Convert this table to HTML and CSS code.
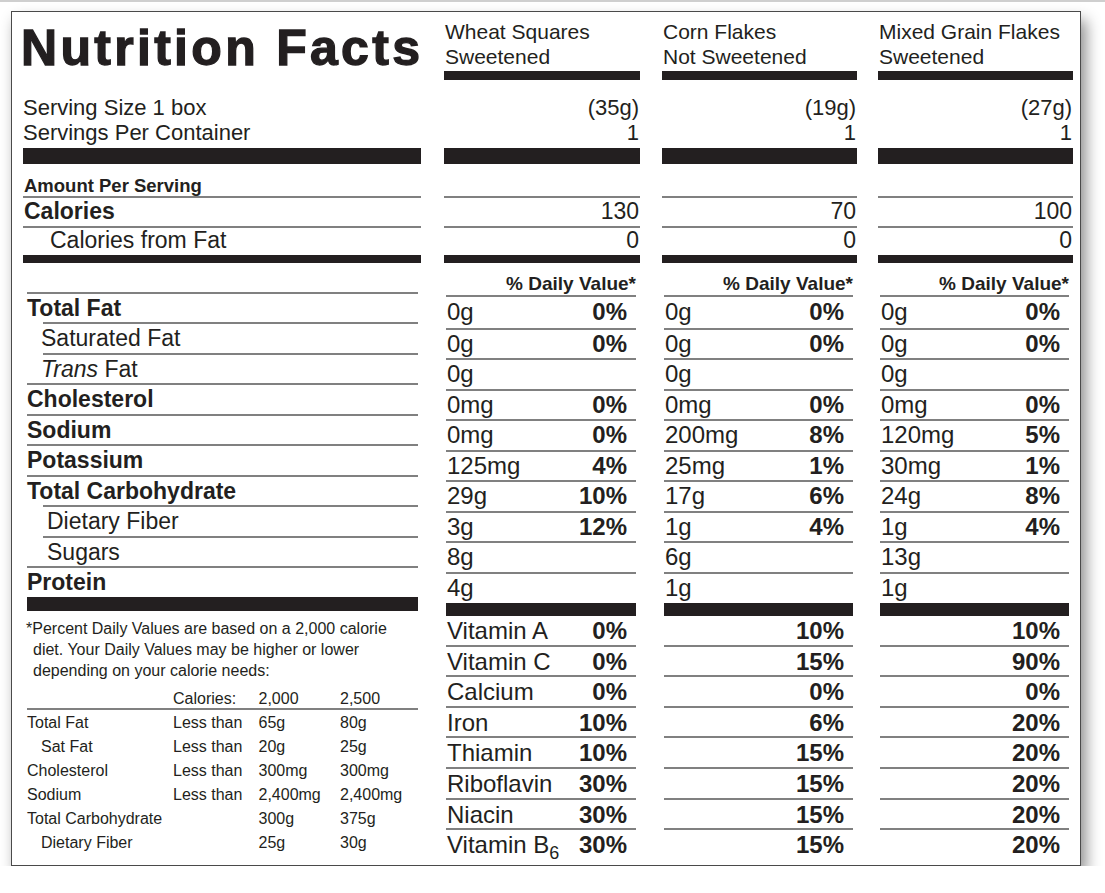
FILE: index.html
```html
<!DOCTYPE html>
<html lang="en">
<head>
<meta charset="utf-8">
<title>Nutrition Facts</title>
<link rel="stylesheet" href="styles.css">
</head>
<body>
<div class="label">
  <div class="col col-main">
    <div class="title">Nutrition Facts</div>
    <div class="serving">
      <div>Serving Size 1 box</div>
      <div>Servings Per Container</div>
    </div>
    <div class="bar bar-thick"></div>
    <div class="amount">Amount Per Serving</div>
    <div class="cal">Calories</div>
    <div class="calfat">Calories from Fat</div>
    <div class="bar bar-mid"></div>
    <div class="gap-l"></div>
    <div class="nutrients">
      <div class="n-row major">Total Fat</div>
      <div class="n-row sub">Saturated Fat</div>
      <div class="n-row sub"><i>Trans</i> Fat</div>
      <div class="n-row major">Cholesterol</div>
      <div class="n-row major">Sodium</div>
      <div class="n-row major">Potassium</div>
      <div class="n-row major">Total Carbohydrate</div>
      <div class="n-row sub sub2">Dietary Fiber</div>
      <div class="n-row sub sub2">Sugars</div>
      <div class="n-row major">Protein</div>
    </div>
    <div class="bar bar-foot"></div>
    <div class="footnote">
      <p class="fn-text">*Percent Daily Values are based on a 2,000 calorie<br>diet. Your Daily Values may be higher or lower<br>depending on your calorie needs:</p>
      <div class="dv-table">
        <div class="dv-line dv-head"><span></span><span>Calories:</span><span>2,000</span><span>2,500</span></div>
        <div class="dv-body">
          <div class="dv-line"><span>Total Fat</span><span>Less than</span><span>65g</span><span>80g</span></div>
          <div class="dv-line"><span class="ind">Sat Fat</span><span>Less than</span><span>20g</span><span>25g</span></div>
          <div class="dv-line"><span>Cholesterol</span><span>Less than</span><span>300mg</span><span>300mg</span></div>
          <div class="dv-line"><span>Sodium</span><span>Less than</span><span>2,400mg</span><span>2,400mg</span></div>
          <div class="dv-line"><span>Total Carbohydrate</span><span></span><span>300g</span><span>375g</span></div>
          <div class="dv-line"><span class="ind">Dietary Fiber</span><span></span><span>25g</span><span>30g</span></div>
        </div>
      </div>
    </div>
  </div>

  <div class="col col-prod p1">
    <div class="prod-name">Wheat Squares<br>Sweetened</div>
    <div class="bar bar-head"></div>
    <div class="serving right">
      <div>(35g)</div>
      <div>1</div>
    </div>
    <div class="bar bar-thick"></div>
    <div class="blank-line"></div>
    <div class="cal-val">130</div>
    <div class="calfat-val">0</div>
    <div class="bar bar-mid"></div>
    <div class="dv-title">% Daily Value*</div>
    <div class="d-rows">
      <div class="d-row"><span>0g</span><b>0%</b></div>
      <div class="d-row"><span>0g</span><b>0%</b></div>
      <div class="d-row"><span>0g</span></div>
      <div class="d-row"><span>0mg</span><b>0%</b></div>
      <div class="d-row"><span>0mg</span><b>0%</b></div>
      <div class="d-row"><span>125mg</span><b>4%</b></div>
      <div class="d-row"><span>29g</span><b>10%</b></div>
      <div class="d-row"><span>3g</span><b>12%</b></div>
      <div class="d-row"><span>8g</span></div>
      <div class="d-row"><span>4g</span></div>
    </div>
    <div class="bar bar-vit"></div>
    <div class="v-rows">
      <div class="v-row"><span>Vitamin A</span><b>0%</b></div>
      <div class="v-row"><span>Vitamin C</span><b>0%</b></div>
      <div class="v-row"><span>Calcium</span><b>0%</b></div>
      <div class="v-row"><span>Iron</span><b>10%</b></div>
      <div class="v-row"><span>Thiamin</span><b>10%</b></div>
      <div class="v-row"><span>Riboflavin</span><b>30%</b></div>
      <div class="v-row"><span>Niacin</span><b>30%</b></div>
      <div class="v-row"><span>Vitamin B<sub>6</sub></span><b>30%</b></div>
    </div>
  </div>

  <div class="col col-prod p2">
    <div class="prod-name">Corn Flakes<br>Not Sweetened</div>
    <div class="bar bar-head"></div>
    <div class="serving right">
      <div>(19g)</div>
      <div>1</div>
    </div>
    <div class="bar bar-thick"></div>
    <div class="blank-line"></div>
    <div class="cal-val">70</div>
    <div class="calfat-val">0</div>
    <div class="bar bar-mid"></div>
    <div class="dv-title">% Daily Value*</div>
    <div class="d-rows">
      <div class="d-row"><span>0g</span><b>0%</b></div>
      <div class="d-row"><span>0g</span><b>0%</b></div>
      <div class="d-row"><span>0g</span></div>
      <div class="d-row"><span>0mg</span><b>0%</b></div>
      <div class="d-row"><span>200mg</span><b>8%</b></div>
      <div class="d-row"><span>25mg</span><b>1%</b></div>
      <div class="d-row"><span>17g</span><b>6%</b></div>
      <div class="d-row"><span>1g</span><b>4%</b></div>
      <div class="d-row"><span>6g</span></div>
      <div class="d-row"><span>1g</span></div>
    </div>
    <div class="bar bar-vit"></div>
    <div class="v-rows">
      <div class="v-row"><span></span><b>10%</b></div>
      <div class="v-row"><span></span><b>15%</b></div>
      <div class="v-row"><span></span><b>0%</b></div>
      <div class="v-row"><span></span><b>6%</b></div>
      <div class="v-row"><span></span><b>15%</b></div>
      <div class="v-row"><span></span><b>15%</b></div>
      <div class="v-row"><span></span><b>15%</b></div>
      <div class="v-row"><span></span><b>15%</b></div>
    </div>
  </div>

  <div class="col col-prod p3">
    <div class="prod-name">Mixed Grain Flakes<br>Sweetened</div>
    <div class="bar bar-head"></div>
    <div class="serving right">
      <div>(27g)</div>
      <div>1</div>
    </div>
    <div class="bar bar-thick"></div>
    <div class="blank-line"></div>
    <div class="cal-val">100</div>
    <div class="calfat-val">0</div>
    <div class="bar bar-mid"></div>
    <div class="dv-title">% Daily Value*</div>
    <div class="d-rows">
      <div class="d-row"><span>0g</span><b>0%</b></div>
      <div class="d-row"><span>0g</span><b>0%</b></div>
      <div class="d-row"><span>0g</span></div>
      <div class="d-row"><span>0mg</span><b>0%</b></div>
      <div class="d-row"><span>120mg</span><b>5%</b></div>
      <div class="d-row"><span>30mg</span><b>1%</b></div>
      <div class="d-row"><span>24g</span><b>8%</b></div>
      <div class="d-row"><span>1g</span><b>4%</b></div>
      <div class="d-row"><span>13g</span></div>
      <div class="d-row"><span>1g</span></div>
    </div>
    <div class="bar bar-vit"></div>
    <div class="v-rows">
      <div class="v-row"><span></span><b>10%</b></div>
      <div class="v-row"><span></span><b>90%</b></div>
      <div class="v-row"><span></span><b>0%</b></div>
      <div class="v-row"><span></span><b>20%</b></div>
      <div class="v-row"><span></span><b>20%</b></div>
      <div class="v-row"><span></span><b>20%</b></div>
      <div class="v-row"><span></span><b>20%</b></div>
      <div class="v-row"><span></span><b>20%</b></div>
    </div>
  </div>
</div>
</body>
</html>
```

FILE: styles.css
```css
html, body {
  background: #ffffff;
}

body {
  margin: 0;
  border-top: 2px solid #cfcfcf;
  padding: 9px 0 0 11px;
  font-family: "Liberation Sans", Arial, Helvetica, sans-serif;
  color: #231f20;
}

.label {
  width: 1070px;
  height: 855px;
  box-sizing: border-box;
  border: 1px solid #4a4a4a;
  box-shadow: 5px 9px 14px rgba(0, 0, 0, 0.45);
  background: #ffffff;
  display: flex;
  padding-left: 11px;
}

.col {
  display: flex;
  flex-direction: column;
  flex: none;
}

.col-main {
  width: 398px;
}

.p1 {
  width: 196px;
  margin-left: 23px;
}

.p2 {
  width: 195px;
  margin-left: 22px;
}

.p3 {
  width: 195px;
  margin-left: 21px;
}

/* bars */
.bar {
  background: #231f20;
  flex: none;
}

.bar-head {
  height: 9px;
}

.bar-thick {
  height: 16px;
}

.bar-mid {
  height: 8px;
}

.bar-foot {
  height: 14px;
  margin: 0 3px 0 4px;
}

.bar-vit {
  height: 13px;
  margin: 0 4px 0 2px;
}

/* top */
.title {
  height: 68px;
  box-sizing: border-box;
  padding-top: 13px;
  margin-left: -2px;
  font-size: 50px;
  line-height: 46px;
  font-weight: 700;
  letter-spacing: 3.3px;
  -webkit-text-stroke: 1.3px #231f20;
  white-space: nowrap;
}

.prod-name {
  height: 59px;
  box-sizing: border-box;
  padding-top: 7px;
  padding-left: 1px;
  font-size: 21px;
  line-height: 25px;
  white-space: nowrap;
}

.serving {
  height: 68px;
  box-sizing: border-box;
  padding-top: 15px;
  font-size: 22px;
  line-height: 25px;
}

.serving.right {
  text-align: right;
  padding-right: 1px;
}

/* calories block */
.amount {
  height: 34px;
  box-sizing: border-box;
  border-bottom: 2px solid #808080;
  display: flex;
  align-items: flex-end;
  padding-left: 1px;
  font-size: 18.5px;
  font-weight: 700;
  line-height: 20px;
}

.blank-line {
  height: 34px;
  box-sizing: border-box;
  border-bottom: 2px solid #808080;
}

.cal,
.cal-val {
  height: 30px;
  box-sizing: border-box;
  border-bottom: 2px solid #808080;
  font-size: 23px;
  line-height: 26px;
}

.cal {
  font-weight: 700;
  padding-left: 1px;
}

.calfat,
.calfat-val {
  height: 27px;
  box-sizing: border-box;
  font-size: 23px;
  line-height: 25px;
}

.calfat {
  padding-left: 27px;
}

.cal-val,
.calfat-val {
  text-align: right;
  padding-right: 1px;
}

.gap-l {
  height: 28.5px;
  flex: none;
}

/* nutrient labels */
.nutrients {
  margin: 0 3px 0 4px;
}

.n-row {
  height: 30.5px;
  box-sizing: border-box;
  border-top: 2px solid #808080;
  font-size: 23px;
  line-height: 28.5px;
  white-space: nowrap;
}

.n-row.major {
  font-weight: 700;
}

.n-row.sub {
  margin-left: 16px;
  text-indent: -2px;
}

.n-row.sub2 {
  text-indent: 4px;
}

/* product value rows */
.dv-title {
  height: 34px;
  box-sizing: border-box;
  border-bottom: 2px solid #808080;
  margin: 0 4px 0 2px;
  display: flex;
  align-items: flex-end;
  justify-content: flex-end;
  font-size: 19px;
  font-weight: 700;
  line-height: 23px;
  white-space: nowrap;
}

.d-rows,
.v-rows {
  margin: 0 4px 0 2px;
}

.d-row,
.v-row {
  display: flex;
  justify-content: space-between;
  box-sizing: border-box;
  border-bottom: 2px solid #808080;
  padding: 0 9px 0 1px;
  font-size: 24px;
  white-space: nowrap;
}

.d-row {
  height: 30.5px;
  line-height: 28.5px;
}

.d-row:first-child {
  height: 32.5px;
  line-height: 30.5px;
}

.d-row:last-child {
  height: 29.5px;
  border-bottom: 0;
}

.v-row {
  height: 30.6px;
  line-height: 30px;
}

.v-row:last-child {
  border-bottom: 0;
}

.d-row b,
.v-row b {
  font-weight: 700;
}

.v-row sub {
  font-size: 18px;
  line-height: 0;
  vertical-align: -6px;
}

/* footnote */
.footnote {
  padding-top: 7px;
}

.fn-text {
  margin: 0;
  padding-left: 10px;
  text-indent: -7px;
  font-size: 16px;
  line-height: 21px;
  white-space: nowrap;
}

.dv-table {
  margin: 8px 3px 0 4px;
  font-size: 16px;
}

.dv-line {
  display: grid;
  grid-template-columns: 146px 85.5px 81.5px 1fr;
  line-height: 24px;
  white-space: nowrap;
}

.dv-head {
  line-height: 19px;
  border-bottom: 2px solid #808080;
}

.dv-body {
  padding-top: 1px;
}

.ind {
  padding-left: 14px;
}
```
